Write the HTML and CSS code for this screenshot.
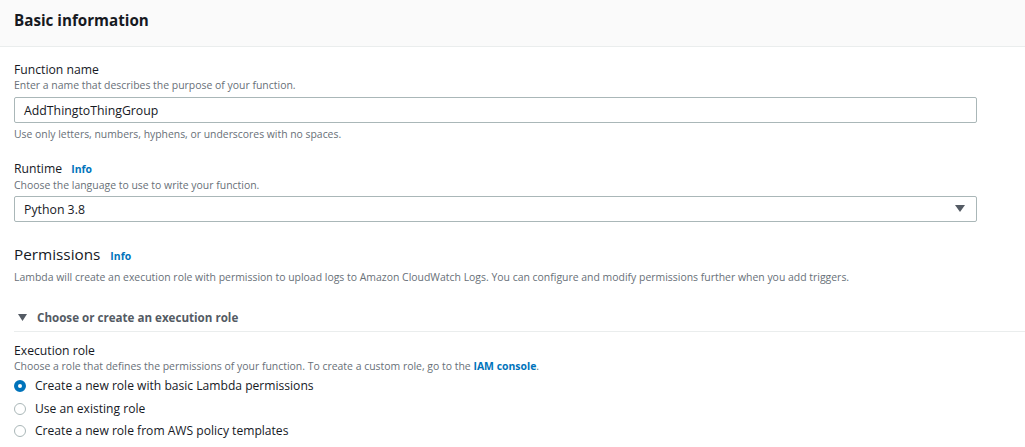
FILE: index.html
```html
<!DOCTYPE html>
<html>
<head>
<meta charset="utf-8">
<link rel="stylesheet" href="styles.css">
</head>
<body>
<div class="panel">
  <div class="panel-header"><h2>Basic information</h2></div>
  <div class="panel-body">
    <div class="field">
      <div class="label">Function name</div>
      <div class="desc">Enter a name that describes the purpose of your function.</div>
      <div class="input">AddThingtoThingGroup</div>
      <div class="hint">Use only letters, numbers, hyphens, or underscores with no spaces.</div>
    </div>
    <div class="field runtime">
      <div class="label">Runtime <a class="info">Info</a></div>
      <div class="desc">Choose the language to use to write your function.</div>
      <div class="input select"><span>Python 3.8</span>
        <svg class="caret" width="10" height="8" viewBox="0 0 10 8"><path d="M0 0h10L5 7z" fill="#545b64"/></svg>
      </div>
    </div>
    <div class="perm">
      <h3>Permissions <a class="info">Info</a></h3>
      <div class="desc">Lambda will create an execution role with permission to upload logs to Amazon CloudWatch Logs. You can configure and modify permissions further when you add triggers.</div>
    </div>
    <div class="expander">
      <svg class="tri" width="9" height="7" viewBox="0 0 9 7"><path d="M0 0h9L4.5 7z" fill="#545b64"/></svg>
      <span>Choose or create an execution role</span>
    </div>
    <div class="field role">
      <div class="label">Execution role</div>
      <div class="desc">Choose a role that defines the permissions of your function. To create a custom role, go to the <a class="link">IAM console</a>.</div>
      <div class="radios">
        <div class="radio"><span class="dot on"></span>Create a new role with basic Lambda permissions</div>
        <div class="radio"><span class="dot"></span>Use an existing role</div>
        <div class="radio"><span class="dot"></span>Create a new role from AWS policy templates</div>
      </div>
    </div>
  </div>
</div>
</body>
</html>
```

FILE: styles.css
```css
* { box-sizing: border-box; }
html, body { margin: 0; padding: 0; background: #fff; }
body {
  font-family: "Open Sans", "Liberation Sans", sans-serif;
  color: #16191f;
  width: 1025px;
  height: 447px;
  overflow: hidden;
}
.panel-header {
  height: 47px;
  background: #fafafa;
  border-bottom: 1px solid #eaeded;
  padding: 0 14px;
  display: flex;
  align-items: center;
}
.panel-header h2 {
  margin: 0;
  font-size: 15.2px;
  font-weight: 700;
  margin-top: -6px;
}
.panel-body {
  padding: 14px 0 0 14px;
}
.label {
  font-size: 12.2px;
  line-height: 17px;
}
.desc {
  font-size: 10.45px;
  line-height: 15px;
  color: #687078;
}
.info {
  color: #0073bb;
  font-weight: 700;
  font-size: 10.4px;
  margin-left: 6px;
}
.link { color: #0073bb; font-weight: 700; }
.input {
  width: 963px;
  height: 26px;
  border: 1px solid #aab7b8;
  border-radius: 2px;
  margin-top: 4px;
  padding: 0 9px;
  font-size: 12.3px;
  display: flex;
  align-items: center;
}
.select { justify-content: space-between; padding-right: 11px; margin-top: 3px; }
.hint {
  font-size: 10.4px;
  color: #687078;
  margin-top: 4px;
  line-height: 15px;
}
.runtime { margin-top: 18px; }
.perm { margin-top: 21px; }
.perm h3 {
  margin: 0;
  font-size: 15.3px;
  font-weight: 400;
  line-height: 22px;
}
.perm .desc { margin-top: 3px; }
.expander {
  margin-top: 23px;
  display: flex;
  align-items: center;
  gap: 10px;
  padding-left: 4px;
  padding-bottom: 4px;
  border-bottom: 1px solid #eaeded;
  font-size: 11.6px;
  font-weight: 700;
  color: #545b64;
  height: 24px;
}
.role { margin-top: 10px; }
.radios { margin-top: 3px; display: flex; flex-direction: column; gap: 4.6px; }
.radio {
  display: flex;
  align-items: center;
  gap: 9px;
  font-size: 12.1px;
  line-height: 18px;
}
.dot {
  width: 12px;
  height: 12px;
  border-radius: 50%;
  border: 1px solid #aab7b8;
  display: inline-block;
}
.dot.on { border: 4px solid #0073bb; }
```
